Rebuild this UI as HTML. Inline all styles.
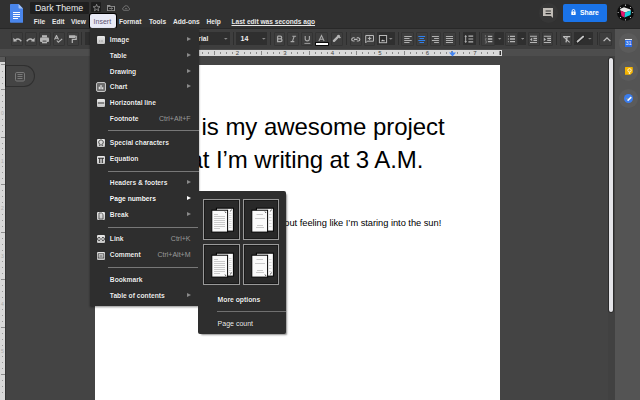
<!DOCTYPE html>
<html><head><meta charset="utf-8">
<style>
*{box-sizing:border-box;margin:0;padding:0}
html,body{width:640px;height:400px;overflow:hidden;background:#444;font-family:"Liberation Sans",sans-serif}
.a{position:absolute}
#hdr{left:0;top:0;width:640px;height:29px;background:#313131;border-bottom:1px solid #282828}
#tb{left:0;top:29px;width:615px;height:20px;background:#3e3e3e}
#rrow{left:0;top:49px;width:615px;height:7px;background:#4d4d4d}
#side{left:615px;top:29px;width:25px;height:371px;background:#545454}
#page{left:95px;top:64.5px;width:405px;height:340px;background:#fff}
.mt{font-size:6.6px;font-weight:bold;color:#e8e8e8;top:18.2px;line-height:7px}
.btn{position:absolute;top:32px;height:13.5px;border:1px solid #343434;border-radius:1px}
.dd{position:absolute;top:32px;height:13px;background:#2f2f2f}
.sep{position:absolute;top:32px;width:1px;height:13px;background:#2e2e2e}
#menu{left:90px;top:28px;width:109px;height:278px;background:#2e2e2e;box-shadow:0 1px 2px rgba(0,0,0,.45)}
.mi{position:absolute;left:19.8px;font-size:6.7px;font-weight:bold;color:#f0f0f0;line-height:7px;white-space:nowrap;text-shadow:0 0 1px #000}
.sc{position:absolute;right:8.5px;font-size:7px;color:#9a9a9a;line-height:7px;white-space:nowrap}
.ar{position:absolute;left:97px;width:0;height:0;border-left:4px solid #8a8a8a;border-top:2.3px solid transparent;border-bottom:2.3px solid transparent}
.ms{position:absolute;left:18px;right:0;height:1px;background:#787878}
.ic{position:absolute;left:6.5px;width:9px;height:9px;border-radius:1.5px;background:linear-gradient(#e8e8e8,#b8b8b8)}
#sub{left:198px;top:191px;width:88px;height:143px;background:#2e2e2e;border-radius:0 2px 2px 2px;box-shadow:2px 2px 2px -1px rgba(0,0,0,.45)}
.tile{position:absolute;width:36.5px;height:41px;border:1px solid #999;box-shadow:inset 0 0 0 1px #1a1a1a;background:#292929}
</style></head><body>
<div id="hdr" class="a"></div>
<div id="tb" class="a"></div>
<div id="rrow" class="a"></div>
<div id="side" class="a"></div>
<div id="page" class="a"></div>

<!-- header content -->
<svg class="a" style="left:10px;top:4px" width="13.2" height="18.7" viewBox="0 0 13.2 18.7">
  <path d="M0.8 0H8.6L13.2 4.6V17.9a0.8 0.8 0 0 1-0.8 0.8H0.8a0.8 0.8 0 0 1-0.8-0.8V0.8a0.8 0.8 0 0 1 0.8-0.8z" fill="#4a86ec"/>
  <path d="M8.6 0L13.2 4.6H9.4a0.8 0.8 0 0 1-0.8-0.8z" fill="#a6c4f7"/>
  <rect x="3" y="8" width="7" height="1" fill="#fff"/>
  <rect x="3" y="10" width="7" height="1" fill="#fff"/>
  <rect x="3" y="12" width="7" height="1" fill="#fff"/>
  <rect x="3" y="14" width="5" height="1" fill="#fff"/>
</svg>
<div class="a" style="left:30px;top:2px;width:59px;height:11.5px;background:#1f1f1f;border-radius:1px"></div>
<div class="a" style="left:35px;top:3.7px;font-size:8.8px;line-height:9px;color:#eeeeee;white-space:nowrap">Dark Theme</div>
<div class="a" style="left:91.4px;top:1.9px;width:10.1px;height:10.5px;background:#1e1e1e;border-radius:1px"></div>
<svg class="a" style="left:92.9px;top:4.1px" width="7.2" height="7.5" viewBox="0 0 7.2 7.5"><path d="M3.60 0.30L4.48 2.69L7.02 2.79L5.03 4.36L5.72 6.81L3.60 5.40L1.48 6.81L2.17 4.36L0.18 2.79L2.72 2.69Z" fill="none" stroke="#9a9a9a" stroke-width="0.8" stroke-linejoin="round"/></svg>
<svg class="a" style="left:107px;top:4.8px" width="8" height="6.2" viewBox="0 0 8 6.2"><path d="M0 0H3L3.8 0.9H8V6.2H0Z" fill="#8f8f8f"/><rect x="1" y="1.9" width="6" height="3.3" fill="#262626"/><path d="M2.2 3.5H5.6M4.4 2.4L5.6 3.5L4.4 4.6" fill="none" stroke="#8f8f8f" stroke-width="0.8"/></svg>
<svg class="a" style="left:122px;top:5px" width="8.2" height="5.8" viewBox="0 0 8.2 5.8"><path d="M1.8 5.3H6.6A1.3 1.3 0 0 0 6.7 2.8 2.6 2.6 0 0 0 1.7 2.4 1.5 1.5 0 0 0 1.8 5.3Z" fill="none" stroke="#808080" stroke-width="0.8"/><path d="M3 3.6H5.2" stroke="#808080" stroke-width="0.7"/></svg>

<div class="a mt" style="left:33.8px">File</div>
<div class="a mt" style="left:52px">Edit</div>
<div class="a mt" style="left:71px">View</div>
<div class="a" style="left:90.2px;top:13.9px;width:25.8px;height:14px;background:#e8eaf6;border-radius:2px;box-shadow:0 0 0 1px #000"></div>
<div class="a mt" style="left:93.6px;color:#5e5470;font-weight:normal;font-size:7px">Insert</div>
<div class="a mt" style="left:119px">Format</div>
<div class="a mt" style="left:149px">Tools</div>
<div class="a mt" style="left:173px">Add-ons</div>
<div class="a mt" style="left:206.5px">Help</div>
<div class="a mt" style="left:231.5px;text-decoration:underline">Last edit was seconds ago</div>

<div class="a" style="left:538.5px;top:3px;width:19.5px;height:19.5px;border-radius:50%;background:#363636"></div>
<svg class="a" style="left:542.8px;top:7.7px" width="10.2" height="10.2" viewBox="0 0 10.2 10.2"><path d="M0 0H10V10L8 8H0Z" fill="#c2beb8"/><path d="M2.6 3H7.9M2.6 5.6H7.9" stroke="#2e2e2e" stroke-width="1.1"/></svg>
<div class="a" style="left:563px;top:4px;width:44px;height:18px;background:#1a73e8;border-radius:2px"></div>
<svg class="a" style="left:570.6px;top:9.4px" width="5" height="6" viewBox="0 0 5 6"><path d="M1.2 2.6V1.8A1.3 1.3 0 0 1 3.8 1.8V2.6" fill="none" stroke="#fff" stroke-width="0.9"/><rect x="0.3" y="2.5" width="4.4" height="3.5" rx="0.4" fill="#fff"/><rect x="2.2" y="3.6" width="0.7" height="1.2" fill="#1a73e8"/></svg>
<div class="a" style="left:580px;top:8.7px;font-size:6.8px;font-weight:bold;line-height:7px;color:#fff">Share</div>
<div class="a" style="left:616.5px;top:4.4px;width:17px;height:17px;border-radius:50%;background:#0c0c0c;box-shadow:0 0 0 0.5px #333"></div><svg class="a" style="left:616.5px;top:4.4px" width="17" height="17" viewBox="0 0 17 17"><g fill="#ddd"><circle cx="8.5" cy="1.2" r="0.6"/><circle cx="13.5" cy="3.5" r="0.6"/><circle cx="15.7" cy="8.5" r="0.6"/><circle cx="13.5" cy="13.5" r="0.6"/><circle cx="8.5" cy="15.8" r="0.6"/><circle cx="3.5" cy="13.5" r="0.6"/><circle cx="1.2" cy="8.5" r="0.6"/><circle cx="3.5" cy="3.5" r="0.6"/></g></svg>
<svg class="a" style="left:616.5px;top:4.4px" width="17" height="17" viewBox="0 0 17 17"><path d="M3 5L7 3.2L13.5 5.5L14 6.5L8 8.5L3.5 6.5Z" fill="#e8e8e8"/><path d="M3.5 6.5L8 8.5L7.5 13.5L4.5 12Z" fill="#e8156e"/><path d="M8 8.5L14 6.5L13.5 11L7.5 13.5Z" fill="#19d0dc"/></svg>


<!-- toolbar -->
<div class="btn" style="left:10.5px;width:12px"></div>
<div class="btn" style="left:24.5px;width:12px"></div>
<div class="btn" style="left:38.5px;width:12px"></div>
<div class="btn" style="left:52.5px;width:12px"></div>
<div class="btn" style="left:66.5px;width:12px"></div>
<svg class="a" style="left:12.5px;top:36.5px" width="9" height="5" viewBox="0 0 9 5"><path d="M2.3 3.2Q5 0.3 8.3 4.3" fill="none" stroke="#b8b8b8" stroke-width="1.4"/><path d="M0.2 0.8L0.5 4.7L4.2 4.2Z" fill="#b8b8b8"/></svg>
<svg class="a" style="left:26px;top:36.5px" width="9" height="5" viewBox="0 0 9 5"><path d="M6.7 3.2Q4 0.3 0.7 4.3" fill="none" stroke="#b8b8b8" stroke-width="1.4"/><path d="M8.8 0.8L8.5 4.7L4.8 4.2Z" fill="#b8b8b8"/></svg>
<svg class="a" style="left:39.7px;top:34.8px" width="9" height="9" viewBox="0 0 9 9"><rect x="2" y="0.2" width="5" height="2.3" fill="#b5b5b5"/><rect x="0" y="2.5" width="9" height="4.5" rx="1" fill="#b5b5b5"/><rect x="2" y="5.5" width="5" height="2.8" fill="#b5b5b5"/><rect x="2.6" y="5.6" width="3.8" height="1" fill="#3c3c3c"/></svg>
<svg class="a" style="left:54px;top:35.3px" width="9" height="8" viewBox="0 0 9 8"><path d="M0.5 4.5L2.5 0.5L4.5 4.5M1.3 3.2H3.7" fill="none" stroke="#b5b5b5" stroke-width="1.1"/><path d="M2.8 5.5L4.3 7.2L8.2 3.8" fill="none" stroke="#b5b5b5" stroke-width="1.1"/></svg>
<svg class="a" style="left:68.5px;top:35.4px" width="8" height="8" viewBox="0 0 8 8"><rect x="0" y="0.2" width="6.3" height="2.8" rx="0.4" fill="#b5b5b5"/><path d="M6.2 1.3H7.2V4.3H3.3V8" fill="none" stroke="#b5b5b5" stroke-width="1.2"/></svg>
<div class="sep" style="left:81px"></div>
<div class="dd" style="left:85px;width:30px"></div>
<div class="dd" style="left:125px;width:70px"></div>
<div class="dd" style="left:196px;width:34px"></div>
<div class="a" style="left:193.6px;top:34.7px;font-size:6.6px;line-height:7px;font-weight:bold;color:#f0f0f0">Arial</div>
<svg class="a" style="left:224px;top:38px" width="3.6" height="1.8" viewBox="0 0 3.6 1.8"><path d="M0 0H3.6L1.8 1.8Z" fill="#8a8a8a"/></svg>
<div class="sep" style="left:233px"></div>
<div class="dd" style="left:235.8px;width:31.2px"></div>
<div class="a" style="left:240.5px;top:35.3px;font-size:7px;line-height:7px;font-weight:bold;color:#f0f0f0">14</div>
<svg class="a" style="left:262px;top:38px" width="3.6" height="1.8" viewBox="0 0 3.6 1.8"><path d="M0 0H3.6L1.8 1.8Z" fill="#8a8a8a"/></svg>
<div class="sep" style="left:270px"></div>
<div class="btn" style="left:273.8px;width:11.7px"></div>
<div class="btn" style="left:287.3px;width:12.2px"></div>
<div class="btn" style="left:301.4px;width:11.7px"></div>
<div class="btn" style="left:315px;width:12.6px"></div>
<svg class="a" style="left:0;top:0" width="640" height="50" viewBox="0 0 640 50"><path d="M277.6 36.2H280.3A1.35 1.35 0 0 1 280.3 38.9H277.6M277.6 38.9H280.6A1.4 1.4 0 0 1 280.6 41.7H277.6V36.2" fill="none" stroke="#a8a8a8" stroke-width="1.3"/><path d="M290.6 41.6H294.3M292.4 41.6L294.2 36.2M292.3 36.2H296.1" fill="none" stroke="#a8a8a8" stroke-width="1.1"/><path d="M305.2 36V38.8A2.1 2.1 0 0 0 309.4 38.8V36" fill="none" stroke="#a8a8a8" stroke-width="1.1"/><path d="M304.4 43.4H310.3" stroke="#a8a8a8" stroke-width="0.9"/><path d="M318.9 40.9L321.5 35.6L324.1 40.9M319.9 39.2H323.1" fill="none" stroke="#a8a8a8" stroke-width="1.1"/></svg>



<div class="a" style="left:315.6px;top:42.6px;width:12px;height:2.8px;background:#fff;box-shadow:0 0 0 0.8px #000"></div>
<div class="btn" style="left:331.3px;width:11.5px"></div>
<svg class="a" style="left:0;top:0" width="640" height="50" viewBox="0 0 640 50"><path d="M334 40.8L338.8 36" stroke="#b5b5b5" stroke-width="2.4" stroke-linecap="round"/><path d="M337.6 35.2L340.4 38" stroke="#b5b5b5" stroke-width="1.6"/></svg>
<div class="sep" style="left:346px"></div>
<div class="btn" style="left:350px;width:11.6px"></div>
<svg class="a" style="left:0;top:0" width="640" height="50" viewBox="0 0 640 50"><path d="M354.6 37.8H353.3A1.6 1.6 0 0 0 353.3 41H354.6M356.8 37.8H358.2A1.6 1.6 0 0 1 358.2 41H356.8M354 39.4H357.5" fill="none" stroke="#b8b8b8" stroke-width="1.1"/></svg>
<div class="btn" style="left:364px;width:11px"></div>
<svg class="a" style="left:0;top:0" width="640" height="50" viewBox="0 0 640 50"><path d="M365.7 42.8V35.5H373.5V41.2H367.3Z" fill="none" stroke="#b8b8b8" stroke-width="1"/><path d="M369.6 36.6V40.1M367.8 38.4H371.4" stroke="#b8b8b8" stroke-width="1"/></svg>
<div class="dd" style="left:377.2px;width:17.5px"></div>
<svg class="a" style="left:0;top:0" width="640" height="50" viewBox="0 0 640 50"><rect x="379.4" y="35.5" width="7.2" height="7.2" fill="#2a2a2a" stroke="#b8b8b8" stroke-width="1"/><path d="M381 41.3L382.3 39.6L383.2 40.5L384 39.7L385.1 41.3Z" fill="#d0d0d0"/></svg>
<svg class="a" style="left:389.3px;top:38px" width="3.6" height="1.8" viewBox="0 0 3.6 1.8"><path d="M0 0H3.6L1.8 1.8Z" fill="#8a8a8a"/></svg>
<div class="sep" style="left:398.4px"></div>
<div class="btn" style="left:401.4px;width:12.6px"></div>
<div class="btn" style="left:416px;width:12px"></div>
<div class="btn" style="left:430px;width:11.2px"></div>
<div class="btn" style="left:443.1px;width:12.7px"></div>
<svg class="a" style="left:0;top:0" width="640" height="50" viewBox="0 0 640 50" fill="#b0b0b0"><rect x="404.2" y="36" width="7.5" height="1"/><rect x="404.2" y="38" width="5.300000000000011" height="1"/><rect x="404.2" y="40" width="7.5" height="1"/><rect x="404.2" y="42" width="5.300000000000011" height="1"/></svg>
<svg class="a" style="left:0;top:0" width="640" height="50" viewBox="0 0 640 50" fill="#3080ea"><rect x="418.3" y="36" width="6.800000000000011" height="1"/><rect x="419.5" y="38" width="4.5" height="1"/><rect x="418.3" y="40" width="6.800000000000011" height="1"/><rect x="419.5" y="42" width="4.5" height="1"/></svg>
<svg class="a" style="left:0;top:0" width="640" height="50" viewBox="0 0 640 50" fill="#b0b0b0"><rect x="431.9" y="36" width="7.0" height="1"/><rect x="434.1" y="38" width="4.7999999999999545" height="1"/><rect x="431.9" y="40" width="7.0" height="1"/><rect x="434.1" y="42" width="4.7999999999999545" height="1"/></svg>
<svg class="a" style="left:0;top:0" width="640" height="50" viewBox="0 0 640 50" fill="#b0b0b0"><rect x="445.9" y="36" width="7.100000000000023" height="1"/><rect x="445.9" y="38" width="7.100000000000023" height="1"/><rect x="445.9" y="40" width="7.100000000000023" height="1"/><rect x="445.9" y="42" width="7.100000000000023" height="1"/></svg>
<div class="sep" style="left:459.4px"></div>
<div class="dd" style="left:462.7px;width:13px"></div>
<svg class="a" style="left:0;top:0" width="640" height="50" viewBox="0 0 640 50"><path d="M465.7 35.5V42.5" stroke="#b5b5b5" stroke-width="1"/><path d="M464.3 36.8L465.7 35.3L467.1 36.8ZM464.3 41.2L465.7 42.7L467.1 41.2Z" fill="#b5b5b5"/><path d="M468.4 36.2H473.2M468.4 39H473.2M468.4 41.8H473.2" stroke="#b5b5b5" stroke-width="1.2"/></svg>
<div class="sep" style="left:478.5px"></div>
<div class="btn" style="left:481px;width:13.8px"></div>
<div class="dd" style="left:494.8px;width:9px"></div>
<svg class="a" style="left:0;top:0" width="640" height="50" viewBox="0 0 640 50"><path d="M487.9 36.3H492.3M487.9 39H492.3M487.9 41.7H492.3" stroke="#b5b5b5" stroke-width="1.3"/><path d="M485.4 35V37.2M484.9 38.3H486.4L485 40H486.5M484.9 41H486.4V43H484.9" fill="none" stroke="#8a8a8a" stroke-width="0.6"/></svg>
<svg class="a" style="left:498.2px;top:38.1px" width="3.4" height="1.7" viewBox="0 0 3.4 1.7"><path d="M0 0H3.4L1.7 1.7Z" fill="#8a8a8a"/></svg>
<div class="btn" style="left:505.4px;width:12.8px"></div>
<div class="dd" style="left:518.2px;width:7.5px"></div>
<svg class="a" style="left:0;top:0" width="640" height="50" viewBox="0 0 640 50"><path d="M510 36.3H515M510 39H515M510 41.7H515" stroke="#b5b5b5" stroke-width="1.3"/><path d="M507.9 36.3H509M507.9 39H509M507.9 41.7H509" stroke="#8f8f8f" stroke-width="1.3"/></svg>
<svg class="a" style="left:521.1px;top:38.1px" width="3.2" height="1.7" viewBox="0 0 3.2 1.7"><path d="M0 0H3.2L1.6 1.7Z" fill="#8a8a8a"/></svg>
<div class="btn" style="left:528.2px;width:11.6px"></div>
<div class="btn" style="left:541.9px;width:11.6px"></div>
<svg class="a" style="left:0;top:0" width="640" height="50" viewBox="0 0 640 50"><path d="M530 36.3H537M533.4 38.4H537M533.4 40.4H537M530 42.5H537" stroke="#b5b5b5" stroke-width="1.1"/><path d="M532.2 37.6L530 39.4L532.2 41.2Z" fill="#b5b5b5"/></svg>
<svg class="a" style="left:0;top:0" width="640" height="50" viewBox="0 0 640 50"><path d="M543.8 36.3H551M547.2 38.4H551M547.2 40.4H551M543.8 42.5H551" stroke="#b5b5b5" stroke-width="1.1"/><path d="M543.8 37.6L546 39.4L543.8 41.2Z" fill="#b5b5b5"/></svg>
<div class="sep" style="left:556.4px"></div>
<div class="btn" style="left:560.2px;width:12.2px"></div>
<svg class="a" style="left:0;top:0" width="640" height="50" viewBox="0 0 640 50"><path d="M563.3 36.6H570.2M567.2 36.6L566 42.3" fill="none" stroke="#bdbdbd" stroke-width="1.3"/><path d="M563.2 36.4L569.6 42.4" stroke="#bdbdbd" stroke-width="1.1"/></svg>
<div class="dd" style="left:574.3px;width:19.2px"></div>
<svg class="a" style="left:0;top:0" width="640" height="50" viewBox="0 0 640 50"><path d="M577.6 41.6L583.2 36.6" stroke="#111" stroke-width="3.2" stroke-linecap="round"/><path d="M577.6 41.6L583.2 36.6" stroke="#c4c4c4" stroke-width="2" stroke-linecap="round"/></svg>
<svg class="a" style="left:587.9px;top:38.4px" width="3.7" height="1.6" viewBox="0 0 3.7 1.6"><path d="M0 0H3.7L1.85 1.6Z" fill="#8a8a8a"/></svg>
<div class="sep" style="left:596.5px"></div>
<div class="btn" style="left:599.1px;width:13.1px"></div>
<svg class="a" style="left:602.5px;top:36.5px" width="8" height="5" viewBox="0 0 8 5"><path d="M0.6 4.1L4 0.9L7.4 4.1" fill="none" stroke="#c0c0c0" stroke-width="1.3"/></svg>


<!-- rulers -->
<div class="a" style="left:95px;top:50px;width:407px;height:6px;background:#d9d9d9"></div>
<div class="a" style="left:101.14px;top:52px;width:1px;height:1.8px;background:#8a8a8a"></div>
<div class="a" style="left:107.08px;top:52px;width:1px;height:1.8px;background:#8a8a8a"></div>
<div class="a" style="left:113.01px;top:52px;width:1px;height:1.8px;background:#8a8a8a"></div>
<div class="a" style="left:118.95px;top:51.2px;width:1px;height:3.6px;background:#888"></div>
<div class="a" style="left:124.89px;top:52px;width:1px;height:1.8px;background:#8a8a8a"></div>
<div class="a" style="left:130.82px;top:52px;width:1px;height:1.8px;background:#8a8a8a"></div>
<div class="a" style="left:136.76px;top:52px;width:1px;height:1.8px;background:#8a8a8a"></div>
<div class="a" style="left:148.64px;top:52px;width:1px;height:1.8px;background:#8a8a8a"></div>
<div class="a" style="left:154.57px;top:52px;width:1px;height:1.8px;background:#8a8a8a"></div>
<div class="a" style="left:160.51px;top:52px;width:1px;height:1.8px;background:#8a8a8a"></div>
<div class="a" style="left:166.45px;top:51.2px;width:1px;height:3.6px;background:#888"></div>
<div class="a" style="left:172.39px;top:52px;width:1px;height:1.8px;background:#8a8a8a"></div>
<div class="a" style="left:178.32px;top:52px;width:1px;height:1.8px;background:#8a8a8a"></div>
<div class="a" style="left:184.26px;top:52px;width:1px;height:1.8px;background:#8a8a8a"></div>
<div class="a" style="left:188.00px;top:50.3px;width:4px;text-align:center;font-size:6px;line-height:6px;color:#444">1</div>
<div class="a" style="left:196.14px;top:52px;width:1px;height:1.8px;background:#8a8a8a"></div>
<div class="a" style="left:202.07px;top:52px;width:1px;height:1.8px;background:#8a8a8a"></div>
<div class="a" style="left:208.01px;top:52px;width:1px;height:1.8px;background:#8a8a8a"></div>
<div class="a" style="left:213.95px;top:51.2px;width:1px;height:3.6px;background:#888"></div>
<div class="a" style="left:219.89px;top:52px;width:1px;height:1.8px;background:#8a8a8a"></div>
<div class="a" style="left:225.82px;top:52px;width:1px;height:1.8px;background:#8a8a8a"></div>
<div class="a" style="left:231.76px;top:52px;width:1px;height:1.8px;background:#8a8a8a"></div>
<div class="a" style="left:235.50px;top:50.3px;width:4px;text-align:center;font-size:6px;line-height:6px;color:#444">2</div>
<div class="a" style="left:243.64px;top:52px;width:1px;height:1.8px;background:#8a8a8a"></div>
<div class="a" style="left:249.57px;top:52px;width:1px;height:1.8px;background:#8a8a8a"></div>
<div class="a" style="left:255.51px;top:52px;width:1px;height:1.8px;background:#8a8a8a"></div>
<div class="a" style="left:261.45px;top:51.2px;width:1px;height:3.6px;background:#888"></div>
<div class="a" style="left:267.39px;top:52px;width:1px;height:1.8px;background:#8a8a8a"></div>
<div class="a" style="left:273.32px;top:52px;width:1px;height:1.8px;background:#8a8a8a"></div>
<div class="a" style="left:279.26px;top:52px;width:1px;height:1.8px;background:#8a8a8a"></div>
<div class="a" style="left:283.00px;top:50.3px;width:4px;text-align:center;font-size:6px;line-height:6px;color:#444">3</div>
<div class="a" style="left:291.14px;top:52px;width:1px;height:1.8px;background:#8a8a8a"></div>
<div class="a" style="left:297.07px;top:52px;width:1px;height:1.8px;background:#8a8a8a"></div>
<div class="a" style="left:303.01px;top:52px;width:1px;height:1.8px;background:#8a8a8a"></div>
<div class="a" style="left:308.95px;top:51.2px;width:1px;height:3.6px;background:#888"></div>
<div class="a" style="left:314.89px;top:52px;width:1px;height:1.8px;background:#8a8a8a"></div>
<div class="a" style="left:320.82px;top:52px;width:1px;height:1.8px;background:#8a8a8a"></div>
<div class="a" style="left:326.76px;top:52px;width:1px;height:1.8px;background:#8a8a8a"></div>
<div class="a" style="left:330.50px;top:50.3px;width:4px;text-align:center;font-size:6px;line-height:6px;color:#444">4</div>
<div class="a" style="left:338.64px;top:52px;width:1px;height:1.8px;background:#8a8a8a"></div>
<div class="a" style="left:344.57px;top:52px;width:1px;height:1.8px;background:#8a8a8a"></div>
<div class="a" style="left:350.51px;top:52px;width:1px;height:1.8px;background:#8a8a8a"></div>
<div class="a" style="left:356.45px;top:51.2px;width:1px;height:3.6px;background:#888"></div>
<div class="a" style="left:362.39px;top:52px;width:1px;height:1.8px;background:#8a8a8a"></div>
<div class="a" style="left:368.32px;top:52px;width:1px;height:1.8px;background:#8a8a8a"></div>
<div class="a" style="left:374.26px;top:52px;width:1px;height:1.8px;background:#8a8a8a"></div>
<div class="a" style="left:378.00px;top:50.3px;width:4px;text-align:center;font-size:6px;line-height:6px;color:#444">5</div>
<div class="a" style="left:386.14px;top:52px;width:1px;height:1.8px;background:#8a8a8a"></div>
<div class="a" style="left:392.07px;top:52px;width:1px;height:1.8px;background:#8a8a8a"></div>
<div class="a" style="left:398.01px;top:52px;width:1px;height:1.8px;background:#8a8a8a"></div>
<div class="a" style="left:403.95px;top:51.2px;width:1px;height:3.6px;background:#888"></div>
<div class="a" style="left:409.89px;top:52px;width:1px;height:1.8px;background:#8a8a8a"></div>
<div class="a" style="left:415.82px;top:52px;width:1px;height:1.8px;background:#8a8a8a"></div>
<div class="a" style="left:421.76px;top:52px;width:1px;height:1.8px;background:#8a8a8a"></div>
<div class="a" style="left:425.50px;top:50.3px;width:4px;text-align:center;font-size:6px;line-height:6px;color:#444">6</div>
<div class="a" style="left:433.64px;top:52px;width:1px;height:1.8px;background:#8a8a8a"></div>
<div class="a" style="left:439.57px;top:52px;width:1px;height:1.8px;background:#8a8a8a"></div>
<div class="a" style="left:445.51px;top:52px;width:1px;height:1.8px;background:#8a8a8a"></div>
<div class="a" style="left:451.45px;top:51.2px;width:1px;height:3.6px;background:#888"></div>
<div class="a" style="left:457.39px;top:52px;width:1px;height:1.8px;background:#8a8a8a"></div>
<div class="a" style="left:463.32px;top:52px;width:1px;height:1.8px;background:#8a8a8a"></div>
<div class="a" style="left:469.26px;top:52px;width:1px;height:1.8px;background:#8a8a8a"></div>
<div class="a" style="left:473.00px;top:50.3px;width:4px;text-align:center;font-size:6px;line-height:6px;color:#444">7</div>
<div class="a" style="left:481.14px;top:52px;width:1px;height:1.8px;background:#8a8a8a"></div>
<div class="a" style="left:487.07px;top:52px;width:1px;height:1.8px;background:#8a8a8a"></div>
<div class="a" style="left:493.01px;top:52px;width:1px;height:1.8px;background:#8a8a8a"></div>
<div class="a" style="left:498.95px;top:51.2px;width:1px;height:3.6px;background:#888"></div>
<div class="a" style="left:499.5px;top:51px;width:1px;height:4px;background:#333"></div>
<svg class="a" style="left:449px;top:51px" width="7" height="6" viewBox="0 0 7 6"><path d="M0 1.5H7L3.5 5.5Z" fill="#4285f4"/><rect x="3" y="0" width="1" height="2" fill="#4285f4"/></svg>
<div class="a" style="left:0;top:57px;width:5px;height:5px;background:#5a5a5a"></div>
<div class="a" style="left:0;top:62px;width:5px;height:338px;background:#d9d9d9"></div>
<div class="a" style="left:1.8px;top:71.19px;width:1.5px;height:1px;background:#9a9a9a"></div>
<div class="a" style="left:1.8px;top:77.14px;width:1.5px;height:1px;background:#9a9a9a"></div>
<div class="a" style="left:1.8px;top:83.08px;width:1.5px;height:1px;background:#9a9a9a"></div>
<div class="a" style="left:0.5px;top:89.03px;width:4px;height:1px;background:#8c8c8c"></div>
<div class="a" style="left:1.8px;top:94.97px;width:1.5px;height:1px;background:#9a9a9a"></div>
<div class="a" style="left:1.8px;top:100.91px;width:1.5px;height:1px;background:#9a9a9a"></div>
<div class="a" style="left:1.8px;top:106.86px;width:1.5px;height:1px;background:#9a9a9a"></div>
<div class="a" style="left:0;top:110.30px;width:5px;text-align:center;font-size:5px;line-height:6px;color:#aaa">0</div>
<div class="a" style="left:1.8px;top:118.74px;width:1.5px;height:1px;background:#9a9a9a"></div>
<div class="a" style="left:1.8px;top:124.69px;width:1.5px;height:1px;background:#9a9a9a"></div>
<div class="a" style="left:1.8px;top:130.63px;width:1.5px;height:1px;background:#9a9a9a"></div>
<div class="a" style="left:0.5px;top:136.57px;width:4px;height:1px;background:#8c8c8c"></div>
<div class="a" style="left:1.8px;top:142.52px;width:1.5px;height:1px;background:#9a9a9a"></div>
<div class="a" style="left:1.8px;top:148.46px;width:1.5px;height:1px;background:#9a9a9a"></div>
<div class="a" style="left:1.8px;top:154.41px;width:1.5px;height:1px;background:#9a9a9a"></div>
<div class="a" style="left:0;top:157.85px;width:5px;text-align:center;font-size:5px;line-height:6px;color:#aaa">1</div>
<div class="a" style="left:1.8px;top:166.29px;width:1.5px;height:1px;background:#9a9a9a"></div>
<div class="a" style="left:1.8px;top:172.24px;width:1.5px;height:1px;background:#9a9a9a"></div>
<div class="a" style="left:1.8px;top:178.18px;width:1.5px;height:1px;background:#9a9a9a"></div>
<div class="a" style="left:0.5px;top:184.12px;width:4px;height:1px;background:#8c8c8c"></div>
<div class="a" style="left:1.8px;top:190.07px;width:1.5px;height:1px;background:#9a9a9a"></div>
<div class="a" style="left:1.8px;top:196.01px;width:1.5px;height:1px;background:#9a9a9a"></div>
<div class="a" style="left:1.8px;top:201.96px;width:1.5px;height:1px;background:#9a9a9a"></div>
<div class="a" style="left:0;top:205.40px;width:5px;text-align:center;font-size:5px;line-height:6px;color:#aaa">2</div>
<div class="a" style="left:1.8px;top:213.84px;width:1.5px;height:1px;background:#9a9a9a"></div>
<div class="a" style="left:1.8px;top:219.79px;width:1.5px;height:1px;background:#9a9a9a"></div>
<div class="a" style="left:1.8px;top:225.73px;width:1.5px;height:1px;background:#9a9a9a"></div>
<div class="a" style="left:0.5px;top:231.68px;width:4px;height:1px;background:#8c8c8c"></div>
<div class="a" style="left:1.8px;top:237.62px;width:1.5px;height:1px;background:#9a9a9a"></div>
<div class="a" style="left:1.8px;top:243.56px;width:1.5px;height:1px;background:#9a9a9a"></div>
<div class="a" style="left:1.8px;top:249.51px;width:1.5px;height:1px;background:#9a9a9a"></div>
<div class="a" style="left:0;top:252.95px;width:5px;text-align:center;font-size:5px;line-height:6px;color:#aaa">3</div>
<div class="a" style="left:1.8px;top:261.39px;width:1.5px;height:1px;background:#9a9a9a"></div>
<div class="a" style="left:1.8px;top:267.34px;width:1.5px;height:1px;background:#9a9a9a"></div>
<div class="a" style="left:1.8px;top:273.28px;width:1.5px;height:1px;background:#9a9a9a"></div>
<div class="a" style="left:0.5px;top:279.22px;width:4px;height:1px;background:#8c8c8c"></div>
<div class="a" style="left:1.8px;top:285.17px;width:1.5px;height:1px;background:#9a9a9a"></div>
<div class="a" style="left:1.8px;top:291.11px;width:1.5px;height:1px;background:#9a9a9a"></div>
<div class="a" style="left:1.8px;top:297.06px;width:1.5px;height:1px;background:#9a9a9a"></div>
<div class="a" style="left:0;top:300.50px;width:5px;text-align:center;font-size:5px;line-height:6px;color:#aaa">4</div>
<div class="a" style="left:1.8px;top:308.94px;width:1.5px;height:1px;background:#9a9a9a"></div>
<div class="a" style="left:1.8px;top:314.89px;width:1.5px;height:1px;background:#9a9a9a"></div>
<div class="a" style="left:1.8px;top:320.83px;width:1.5px;height:1px;background:#9a9a9a"></div>
<div class="a" style="left:0.5px;top:326.77px;width:4px;height:1px;background:#8c8c8c"></div>
<div class="a" style="left:1.8px;top:332.72px;width:1.5px;height:1px;background:#9a9a9a"></div>
<div class="a" style="left:1.8px;top:338.66px;width:1.5px;height:1px;background:#9a9a9a"></div>
<div class="a" style="left:1.8px;top:344.61px;width:1.5px;height:1px;background:#9a9a9a"></div>
<div class="a" style="left:0;top:348.05px;width:5px;text-align:center;font-size:5px;line-height:6px;color:#aaa">5</div>
<div class="a" style="left:1.8px;top:356.49px;width:1.5px;height:1px;background:#9a9a9a"></div>
<div class="a" style="left:1.8px;top:362.44px;width:1.5px;height:1px;background:#9a9a9a"></div>
<div class="a" style="left:1.8px;top:368.38px;width:1.5px;height:1px;background:#9a9a9a"></div>
<div class="a" style="left:0.5px;top:374.32px;width:4px;height:1px;background:#8c8c8c"></div>
<div class="a" style="left:1.8px;top:380.27px;width:1.5px;height:1px;background:#9a9a9a"></div>
<div class="a" style="left:1.8px;top:386.21px;width:1.5px;height:1px;background:#9a9a9a"></div>
<div class="a" style="left:1.8px;top:392.16px;width:1.5px;height:1px;background:#9a9a9a"></div>
<div class="a" style="left:0.5px;top:64.3px;width:4px;height:1px;background:#8c8c8c"></div>
<div class="a" style="left:5px;top:57px;width:1px;height:343px;background:#333"></div>
<!-- outline button -->
<div class="a" style="left:5px;top:65px;width:29.5px;height:22px;border:1px solid #2f2f2f;border-left:1px solid #111;border-radius:0 11px 11px 0"></div>
<svg class="a" style="left:0;top:0" width="40" height="100" viewBox="0 0 40 100"><rect x="15.5" y="72.5" width="9" height="8.5" rx="1.3" fill="none" stroke="#7a7a7a" stroke-width="1"/><path d="M17.5 74.5H22.5M17.5 76.5H22.5M17.5 78.5H22.5" stroke="#7a7a7a" stroke-width="1"/></svg>
<!-- scrollbar -->
<div class="a" style="left:608px;top:56px;width:7px;height:344px;background:#414141"></div>
<div class="a" style="left:608.8px;top:57.5px;width:4.4px;height:254.5px;background:#e4e4e8;border-radius:2.2px;box-shadow:0 0 0 0.8px #262626"></div>
<!-- side icons -->
<div class="a" style="left:618.8px;top:33.3px;width:19.4px;height:19.4px;border-radius:50%;background:#5b5b5b"></div>
<div class="a" style="left:625px;top:38.9px;width:7.2px;height:7.9px;background:#2b6de8"></div>
<div class="a" style="left:625px;top:38.9px;width:7.2px;height:1px;background:#e6e9f0"></div>
<div class="a" style="left:625px;top:40.3px;width:7.2px;font-size:5.5px;line-height:6px;color:#f0f4ff;text-align:center">31</div>
<div class="a" style="left:618.8px;top:61.2px;width:19.4px;height:19.4px;border-radius:50%;background:#5b5b5b"></div>
<div class="a" style="left:624.9px;top:66.9px;width:7.9px;height:7.9px;background:#f5b400;border-radius:0.5px;clip-path:polygon(0 0,100% 0,100% 70%,70% 100%,0 100%)"></div>
<svg class="a" style="left:626.5px;top:67.5px" width="5" height="6.5" viewBox="0 0 5 6.5"><circle cx="2.5" cy="2.3" r="1.7" fill="none" stroke="#fff" stroke-width="0.8"/><path d="M1.8 4.5H3.2V5.8H1.8Z" fill="#fff"/></svg>
<div class="a" style="left:618.8px;top:88.7px;width:19.4px;height:19.4px;border-radius:50%;background:#5b5b5b"></div>
<div class="a" style="left:623.7px;top:93.6px;width:9.4px;height:9.4px;border-radius:50%;background:#3b7ded"></div>
<svg class="a" style="left:623.7px;top:93.6px" width="9.4" height="9.4" viewBox="0 0 9.4 9.4"><path d="M3.6 6.6L7.3 3.1" stroke="#fff" stroke-width="1.5"/><path d="M2 4.9L3.2 3.9L3.4 5.2Z" fill="#f5b400"/></svg>

<!-- document text -->
<div class="a" style="left:149.8px;top:113.3px;font-size:24px;letter-spacing:-0.05px;line-height:27px;color:#000;white-space:nowrap">This is my awesome project</div>
<div class="a" style="left:169.8px;top:146.3px;font-size:24px;letter-spacing:-0.1px;line-height:27px;color:#000;white-space:nowrap">that I’m writing at 3 A.M.</div>
<div class="a" style="left:227.3px;top:217.6px;font-size:9.3px;letter-spacing:-0.03px;line-height:11px;color:#000;white-space:nowrap">Something about feeling like I’m staring into the sun!</div>


<!-- insert menu -->
<div id="menu" class="a"><svg width="0" height="0" style="position:absolute"><defs><linearGradient id="ig" x1="0" y1="0" x2="0" y2="1"><stop offset="0" stop-color="#ececec"/><stop offset="1" stop-color="#c2c2c2"/></linearGradient></defs></svg>
 <svg class="a" style="left:6px;top:6.8px" width="10" height="10" viewBox="0 0 10 10"><rect x="0.5" y="0.5" width="9" height="9" rx="1.5" fill="url(#ig)" stroke="#151515" stroke-width="0.8"/><path d="M3.3 6H4.2M5.4 6H6.6" stroke="#777" stroke-width="0.9"/></svg>
 <svg class="a" style="left:6px;top:54px" width="10" height="10" viewBox="0 0 10 10"><rect x="0.5" y="0.5" width="9" height="9" rx="1.5" fill="#6d6d6d" stroke="#c4c4c4" stroke-width="1"/><path d="M3.3 7.3V4.8M5 7.3V3M6.7 7.3V5.2" stroke="#eee" stroke-width="1.1"/></svg>
 <svg class="a" style="left:6px;top:70px" width="10" height="10" viewBox="0 0 10 10"><rect x="0.5" y="0.5" width="9" height="9" rx="1.5" fill="url(#ig)" stroke="#151515" stroke-width="0.8"/><path d="M1.8 5H8.2" stroke="#555" stroke-width="1.3"/></svg>
 <svg class="a" style="left:6px;top:110.1px" width="10" height="10" viewBox="0 0 10 10"><rect x="0.5" y="0.5" width="9" height="9" rx="1.5" fill="url(#ig)" stroke="#151515" stroke-width="0.8"/><path d="M3 7.3H4.2V6.4A2.3 2.3 0 1 1 5.8 6.4V7.3H7" fill="none" stroke="#444" stroke-width="0.9"/></svg>
 <svg class="a" style="left:6px;top:126.5px" width="10" height="10" viewBox="0 0 10 10"><rect x="0.5" y="0.5" width="9" height="9" rx="1.5" fill="url(#ig)" stroke="#151515" stroke-width="0.8"/><path d="M2 3.2H8M3.7 3.2V8M6.3 3.2V8" fill="none" stroke="#333" stroke-width="1.1"/></svg>
 <svg class="a" style="left:6px;top:182.7px" width="10" height="10" viewBox="0 0 10 10"><rect x="0.5" y="0.5" width="9" height="9" rx="1.5" fill="url(#ig)" stroke="#151515" stroke-width="0.8"/><path d="M3 2H5.7L7 3.3V8H3Z" fill="none" stroke="#555" stroke-width="0.9"/></svg>
 <svg class="a" style="left:6px;top:206.4px" width="10" height="10" viewBox="0 0 10 10"><rect x="0.5" y="0.5" width="9" height="9" rx="1.5" fill="url(#ig)" stroke="#151515" stroke-width="0.8"/><path d="M4 3.5H3A1.5 1.5 0 0 0 3 6.5H4M6 3.5H7A1.5 1.5 0 0 1 7 6.5H6M3.5 5H6.5" fill="none" stroke="#444" stroke-width="0.9"/></svg>
 <svg class="a" style="left:6px;top:222.6px" width="10" height="10" viewBox="0 0 10 10"><rect x="0.5" y="0.5" width="9" height="9" rx="1.5" fill="url(#ig)" stroke="#151515" stroke-width="0.8"/><path d="M3 5H7M5 3V7" stroke="#444" stroke-width="0"/><rect x="2.2" y="2.8" width="5.6" height="4.2" fill="none" stroke="#444" stroke-width="0.8"/><path d="M3.5 5H6.5" stroke="#444" stroke-width="0.9"/></svg>
 <div class="mi" style="top:7.7px">Image</div><div class="ar" style="top:8.9px"></div>
 <div class="mi" style="top:23.7px">Table</div><div class="ar" style="top:24.9px"></div>
 <div class="mi" style="top:39.7px">Drawing</div><div class="ar" style="top:40.9px"></div>
 <div class="mi" style="top:55.0px">Chart</div><div class="ar" style="top:56.2px"></div>
 <div class="mi" style="top:71.0px">Horizontal line</div>
 <div class="mi" style="top:87.0px">Footnote</div><div class="sc" style="top:86.9px">Ctrl+Alt+F</div>
 <div class="ms" style="top:102px"></div>
 <div class="mi" style="top:110.9px">Special characters</div>
 <div class="mi" style="top:126.9px">Equation</div>
 <div class="ms" style="top:143px"></div>
 <div class="mi" style="top:150.9px">Headers &amp; footers</div><div class="ar" style="top:152.1px"></div>
 <div class="mi" style="top:166.9px;color:#fff">Page numbers</div><div class="ar" style="top:168.1px;border-left-color:#fff"></div>
 <div class="mi" style="top:182.9px">Break</div><div class="ar" style="top:184.1px"></div>
 <div class="ms" style="top:199px"></div>
 <div class="mi" style="top:206.9px">Link</div><div class="sc" style="top:207.4px">Ctrl+K</div>
 <div class="mi" style="top:222.9px">Comment</div><div class="sc" style="top:223.1px">Ctrl+Alt+M</div>
 <div class="ms" style="top:239px"></div>
 <div class="mi" style="top:247.7px">Bookmark</div>
 <div class="mi" style="top:263.7px">Table of contents</div><div class="ar" style="top:264.9px"></div>
</div>
<!-- submenu -->
<div id="sub" class="a">
 <div class="tile" style="left:5px;top:8px"></div>
 <svg class="a" style="left:5px;top:8px" width="37" height="41" viewBox="0 0 37 41"><rect x="13.4" y="9.2" width="17" height="22.9" fill="#fafafa" stroke="#000" stroke-width="1"/><rect x="8.8" y="11.2" width="15.8" height="21.9" fill="#fafafa" stroke="#000" stroke-width="1"/><path d="M11 15.5H15" stroke="#b5b5b5" stroke-width="0.7"/><path d="M26 14.5H28.5" stroke="#c8c8c8" stroke-width="0.7"/><path d="M11 17.5H22" stroke="#b5b5b5" stroke-width="0.7"/><path d="M26 16.5H28.5" stroke="#c8c8c8" stroke-width="0.7"/><path d="M11 19.5H22" stroke="#b5b5b5" stroke-width="0.7"/><path d="M26 18.5H28.5" stroke="#c8c8c8" stroke-width="0.7"/><path d="M11 21.5H22" stroke="#b5b5b5" stroke-width="0.7"/><path d="M26 20.5H28.5" stroke="#c8c8c8" stroke-width="0.7"/><path d="M11 23.5H22" stroke="#b5b5b5" stroke-width="0.7"/><path d="M26 22.5H28.5" stroke="#c8c8c8" stroke-width="0.7"/><path d="M11 25.5H22" stroke="#b5b5b5" stroke-width="0.7"/><path d="M26 24.5H28.5" stroke="#c8c8c8" stroke-width="0.7"/><path d="M11 27.5H22" stroke="#b5b5b5" stroke-width="0.7"/><path d="M26 26.5H28.5" stroke="#c8c8c8" stroke-width="0.7"/><path d="M11 29.5H17" stroke="#b5b5b5" stroke-width="0.7"/><path d="M26 28.5H28.5" stroke="#c8c8c8" stroke-width="0.7"/><path d="M22 12.5L23 14M28.5 10.5L27.3 12.5" stroke="#444" stroke-width="0.9"/></svg>
 <div class="tile" style="left:44.6px;top:8px"></div>
 <svg class="a" style="left:44.6px;top:8px" width="37" height="41" viewBox="0 0 37 41"><rect x="13.4" y="9.2" width="17" height="22.9" fill="#fafafa" stroke="#000" stroke-width="1"/><rect x="8.8" y="11.2" width="15.8" height="21.9" fill="#fafafa" stroke="#000" stroke-width="1"/><path d="M13.5 15.5H20M12 19.5H22M14 26.5H20M13 28.5H21" stroke="#b5b5b5" stroke-width="0.7"/><path d="M26 15.5H28.5" stroke="#c8c8c8" stroke-width="0.7"/><path d="M26 18.5H28.5" stroke="#c8c8c8" stroke-width="0.7"/><path d="M26 21.5H28.5" stroke="#c8c8c8" stroke-width="0.7"/><path d="M26 24.5H28.5" stroke="#c8c8c8" stroke-width="0.7"/><path d="M26 27.5H28.5" stroke="#c8c8c8" stroke-width="0.7"/><path d="M22 12.5L23 14M28.5 10.5L27.3 12.5" stroke="#444" stroke-width="0.9"/></svg>
 <div class="tile" style="left:5px;top:53px"></div>
 <svg class="a" style="left:5px;top:53px" width="37" height="41" viewBox="0 0 37 41"><rect x="13.4" y="9.2" width="17" height="22.9" fill="#fafafa" stroke="#000" stroke-width="1"/><rect x="8.8" y="11.2" width="15.8" height="21.9" fill="#fafafa" stroke="#000" stroke-width="1"/><path d="M11 15.5H15" stroke="#b5b5b5" stroke-width="0.7"/><path d="M26 14.5H28.5" stroke="#c8c8c8" stroke-width="0.7"/><path d="M11 17.5H22" stroke="#b5b5b5" stroke-width="0.7"/><path d="M26 16.5H28.5" stroke="#c8c8c8" stroke-width="0.7"/><path d="M11 19.5H22" stroke="#b5b5b5" stroke-width="0.7"/><path d="M26 18.5H28.5" stroke="#c8c8c8" stroke-width="0.7"/><path d="M11 21.5H22" stroke="#b5b5b5" stroke-width="0.7"/><path d="M26 20.5H28.5" stroke="#c8c8c8" stroke-width="0.7"/><path d="M11 23.5H22" stroke="#b5b5b5" stroke-width="0.7"/><path d="M26 22.5H28.5" stroke="#c8c8c8" stroke-width="0.7"/><path d="M11 25.5H22" stroke="#b5b5b5" stroke-width="0.7"/><path d="M26 24.5H28.5" stroke="#c8c8c8" stroke-width="0.7"/><path d="M11 27.5H22" stroke="#b5b5b5" stroke-width="0.7"/><path d="M26 26.5H28.5" stroke="#c8c8c8" stroke-width="0.7"/><path d="M11 29.5H17" stroke="#b5b5b5" stroke-width="0.7"/><path d="M26 28.5H28.5" stroke="#c8c8c8" stroke-width="0.7"/><path d="M22 30.5L23 32M28.5 28.5L27.3 30.5" stroke="#444" stroke-width="0.9"/></svg>
 <div class="tile" style="left:44.6px;top:53px"></div>
 <svg class="a" style="left:44.6px;top:53px" width="37" height="41" viewBox="0 0 37 41"><rect x="13.4" y="9.2" width="17" height="22.9" fill="#fafafa" stroke="#000" stroke-width="1"/><rect x="8.8" y="11.2" width="15.8" height="21.9" fill="#fafafa" stroke="#000" stroke-width="1"/><path d="M13.5 15.5H20M12 19.5H22M14 26.5H20M13 28.5H21" stroke="#b5b5b5" stroke-width="0.7"/><path d="M26 15.5H28.5" stroke="#c8c8c8" stroke-width="0.7"/><path d="M26 18.5H28.5" stroke="#c8c8c8" stroke-width="0.7"/><path d="M26 21.5H28.5" stroke="#c8c8c8" stroke-width="0.7"/><path d="M26 24.5H28.5" stroke="#c8c8c8" stroke-width="0.7"/><path d="M26 27.5H28.5" stroke="#c8c8c8" stroke-width="0.7"/><path d="M22 30.5L23 32M28.5 28.5L27.3 30.5" stroke="#444" stroke-width="0.9"/></svg>
 <div class="mi" style="left:19.6px;top:104.5px;font-size:6.8px">More options</div>
 <div class="ms" style="left:18.8px;top:120px;background:#707070"></div>
 <div class="mi" style="left:19.6px;top:128.8px;font-size:7px;font-weight:normal;color:#f2f2f2">Page count</div>
</div>

</body></html>
